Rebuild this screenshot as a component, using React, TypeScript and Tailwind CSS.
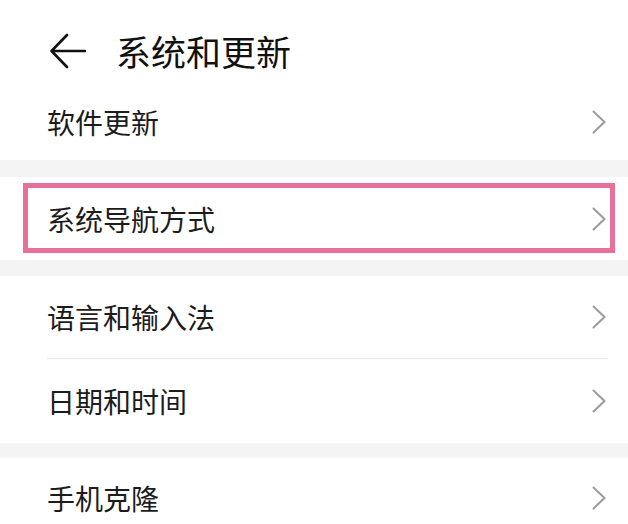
import React from "react";

const font = { fontFamily: '"Noto Sans CJK SC", "Noto Sans", sans-serif' };

function Chevron() {
  return (
    <svg width="14" height="24" viewBox="0 0 14 24" className="shrink-0">
      <path d="M1.5 1.5 L12.5 12 L1.5 22.5" fill="none" stroke="#9b9b9b" strokeWidth="2" strokeLinecap="round" strokeLinejoin="round" />
    </svg>
  );
}

function Row({ label, h, highlight }: { label: string; h: string; highlight?: boolean }) {
  return (
    <div className={`relative flex items-center justify-between bg-white pl-[47px] pr-[22px] ${h}`}>
      <span className="text-[28px] leading-none text-[#1c1c1c]">{label}</span>
      <Chevron />
      {highlight && (
        <div className="pointer-events-none absolute left-[23px] right-[13px] top-[6px] bottom-[7px] border-[5px] border-[#e9709a]" />
      )}
    </div>
  );
}

export default function App() {
  return (
    <div className="w-[628px] h-[524px] overflow-hidden bg-white" style={font}>
      <div className="flex h-[84px] items-start pt-[33px] pl-[50px]">
        <svg width="36" height="36" viewBox="0 0 36 36" className="shrink-0">
          <path d="M1.5 18 H35 M17 2 L1.5 18 L17 34" fill="none" stroke="#111" strokeWidth="2.6" strokeLinecap="round" strokeLinejoin="round" />
        </svg>
        <span className="ml-[30px] text-[35px] leading-[36px] font-normal text-[#111]">系统和更新</span>
      </div>
      <Row label="软件更新" h="h-[76px]" />
      <div className="h-[17px] bg-[#f4f4f4]" />
      <Row label="系统导航方式" h="h-[83px]" highlight />
      <div className="h-[16px] bg-[#f4f4f4]" />
      <Row label="语言和输入法" h="h-[82px]" />
      <div className="flex bg-white pl-[47px] pr-[20px]">
        <div className="h-px flex-1 bg-[#e6e6e6]" />
      </div>
      <Row label="日期和时间" h="h-[84px]" />
      <div className="h-[15px] bg-[#f4f4f4]" />
      <Row label="手机克隆" h="h-[80px]" />
    </div>
  );
}
